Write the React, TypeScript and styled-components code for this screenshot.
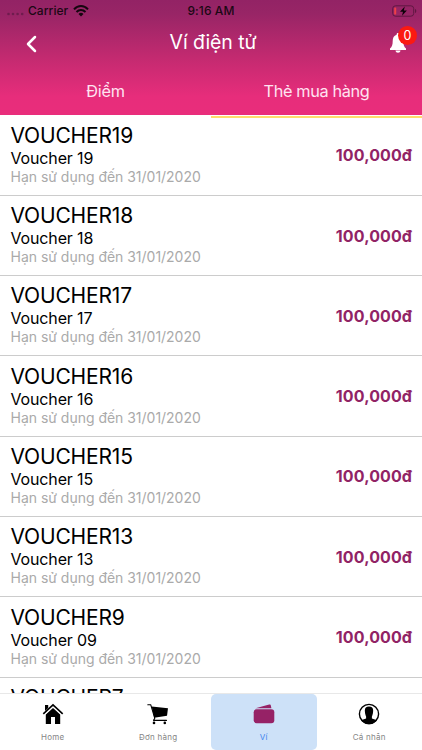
import React from 'react';
import styled, { createGlobalStyle } from 'styled-components';

const GlobalStyle = createGlobalStyle`
  * { box-sizing: border-box; }
  html, body { margin: 0; padding: 0; background: #fff; overflow: hidden; }
  body { font-family: Inter, "Noto Sans", sans-serif; }
`;

const Screen = styled.div`
  width: 422px;
  height: 750px;
  display: flex;
  flex-direction: column;
  overflow: hidden;
  background: #fff;
`;

const Header = styled.header`
  flex: none;
  height: 115px;
  display: flex;
  flex-direction: column;
  color: #fff;
  background: linear-gradient(180deg, #932365 0%, #982566 12%, #c32a70 50%, #e72d7b 84%, #e92d7b 100%);
`;

const StatusBar = styled.div`
  height: 21px;
  display: grid;
  grid-template-columns: 1fr auto 1fr;
  align-items: center;
  padding: 0 5px 0 7px;
  color: #1b0814;
  font-size: 12px;
  line-height: 20px;
  font-weight: 500;
`;

const Carrier = styled.div`
  display: flex;
  align-items: center;
  letter-spacing: 0.05px;
`;

const Clock = styled.span`
  letter-spacing: 0.1px;
  margin-right: 2px;
`;

const Signal = styled.svg`
  width: 17px;
  height: 4px;
  margin: 6px 4px 0 0;
`;

const Wifi = styled.svg`
  width: 16px;
  height: 12px;
  margin-left: 5px;
`;

const Battery = styled.svg`
  width: 25px;
  height: 12px;
  justify-self: end;
`;

const TitleBar = styled.div`
  height: 45px;
  display: grid;
  grid-template-columns: 60px 1fr 60px;
  align-items: center;
`;

const BackIcon = styled.svg`
  width: 12px;
  height: 18px;
  margin-left: 25px;
`;

const Title = styled.h1`
  margin: 0;
  padding: 0 0 3px 4px;
  text-align: center;
  font-size: 19.5px;
  line-height: 28px;
  font-weight: 400;
  letter-spacing: -0.1px;
`;

const Bell = styled.div`
  position: relative;
  width: 32px;
  height: 32px;
  margin: -10px 0 0 25px;
`;

const BellIcon = styled.svg`
  position: absolute;
  left: 2px;
  top: 10px;
  width: 18px;
  height: 20px;
`;

const Badge = styled.span`
  position: absolute;
  left: 11px;
  top: 3px;
  width: 19px;
  height: 19px;
  border-radius: 50%;
  background: #fb1a12;
  font-size: 12.5px;
  line-height: 19px;
  text-align: center;
`;

const Tabs = styled.div`
  height: 49px;
  display: grid;
  grid-template-columns: 1fr 1fr;
`;

const Tab = styled.div<{ $active?: boolean }>`
  text-align: center;
  font-size: 16.3px;
  letter-spacing: ${p => (p.$active ? '-0.35px' : '-0.2px')};
  line-height: 50px;
  color: #ffe3f1;
  border-bottom: 2px solid ${p => (p.$active ? '#ffdc6b' : 'transparent')};
`;

const List = styled.main`
  flex: 1;
  min-height: 0;
  padding-top: 0.6px;
  overflow: hidden;
`;

const Row = styled.div`
  height: 80.3px;
  display: flex;
  align-items: center;
  justify-content: space-between;
  padding: 0 10px 0 10.5px;
  border-bottom: 1px solid #ccc;
`;

const Info = styled.div`
  display: flex;
  flex-direction: column;
  padding-bottom: 3px;
`;

const Code = styled.div`
  font-size: 21px;
  line-height: 25px;
  letter-spacing: -0.18px;
  color: #000;
`;

const Name = styled.div`
  font-size: 16px;
  line-height: 20px;
  letter-spacing: -0.15px;
  color: #000;
`;

const Expiry = styled.div`
  font-size: 14px;
  line-height: 17px;
  letter-spacing: -0.02px;
  color: #aaa;
`;

const Price = styled.div`
  font-size: 16px;
  line-height: 20px;
  font-weight: 700;
  letter-spacing: 0.1px;
  color: #912365;
`;

const NavBar = styled.nav`
  flex: none;
  height: 57px;
  display: grid;
  grid-template-columns: repeat(4, 1fr);
  border-top: 1px solid #e8e8e8;
`;

const NavItem = styled.div<{ $active?: boolean }>`
  display: flex;
  flex-direction: column;
  align-items: center;
  padding-top: 9px;
  border-radius: 5px;
  background: ${p => (p.$active ? '#cde1f8' : '#fff')};
  color: ${p => (p.$active ? '#4285ee' : '#858585')};
  font-size: 8px;
  line-height: 12px;
  letter-spacing: 0.25px;
`;

const NavIcon = styled.svg`
  width: 22px;
  height: 22px;
  margin-bottom: 6px;
`;

const vouchers = [
  { code: 'VOUCHER19', name: 'Voucher 19' },
  { code: 'VOUCHER18', name: 'Voucher 18' },
  { code: 'VOUCHER17', name: 'Voucher 17' },
  { code: 'VOUCHER16', name: 'Voucher 16' },
  { code: 'VOUCHER15', name: 'Voucher 15' },
  { code: 'VOUCHER13', name: 'Voucher 13' },
  { code: 'VOUCHER9', name: 'Voucher 09' },
  { code: 'VOUCHER7', name: 'Voucher 07' },
];

export default function App() {
  return (
    <Screen>
      <GlobalStyle />
      <Header>
        <StatusBar>
          <Carrier>
            <Signal viewBox="0 0 17 4" fill="#6f1c4e">
              <circle cx="1.5" cy="2" r="1.3" />
              <circle cx="6" cy="2" r="1.3" />
              <circle cx="10.6" cy="2" r="1.3" />
              <circle cx="15.2" cy="2" r="1.3" />
            </Signal>
            Carrier
            <Wifi viewBox="0 0 16 12" fill="none" stroke="#16060f" strokeWidth="2">
              <path d="M1 4.3C5-.1 11-.1 15 4.3M3.5 7c2.6-2.8 6.4-2.8 9 0" />
              <path d="M8 11.5 5.5 8.9c1.4-1.4 3.6-1.4 5 0z" fill="#16060f" stroke="none" />
            </Wifi>
          </Carrier>
          <Clock>9:16 AM</Clock>
          <Battery viewBox="0 0 25 12">
            <rect x=".7" y=".8" width="21" height="10.4" rx="2.8" fill="none" stroke="#601742" />
            <rect x="2.2" y="2.4" width="2" height="7.2" rx=".7" fill="#ee4048" />
            <path d="M23 4v4c1.7-.5 1.7-3.5 0-4z" fill="#601742" />
            <path d="M12.8 1.5 8 6.7h3l-1 4 4.9-5.3h-3.1z" fill="#0c0308" />
          </Battery>
        </StatusBar>
        <TitleBar>
          <BackIcon viewBox="0 0 12 18" fill="none" stroke="#fff" strokeWidth="2.5" strokeLinecap="round" strokeLinejoin="round">
            <path d="M10 2 3 9l7 7" />
          </BackIcon>
          <Title>Ví điện tử</Title>
          <Bell>
            <BellIcon viewBox="0 0 18 20" fill="#fff">
              <path d="M9 0C8 0 7.6.7 7.6 1.7 4.8 2.5 3.7 5 3.7 8c0 4-.7 5.7-2.7 7.5V17h16v-1.5c-2-1.8-2.7-3.5-2.7-7.5 0-3-1.1-5.5-3.9-6.3C10.4.7 10 0 9 0zM6.5 17.5h5c-.2 1.5-1.2 2.2-2.5 2.2s-2.3-.7-2.5-2.2z" />
            </BellIcon>
            <Badge>0</Badge>
          </Bell>
        </TitleBar>
        <Tabs>
          <Tab>Điểm</Tab>
          <Tab $active>Thẻ mua hàng</Tab>
        </Tabs>
      </Header>
      <List>
        {vouchers.map(v => (
          <Row key={v.code}>
            <Info>
              <Code>{v.code}</Code>
              <Name>{v.name}</Name>
              <Expiry>Hạn sử dụng đến 31/01/2020</Expiry>
            </Info>
            <Price>100,000đ</Price>
          </Row>
        ))}
      </List>
      <NavBar>
        <NavItem>
          <NavIcon viewBox="0 0 22 22">
            <path d="M3 8V2h3.2v3M3.8 11.5 11 5l7.2 6.5V21H13v-7H9v7H3.8z" />
            <path d="M1.3 10.9 11 1.9l9.7 9" fill="none" stroke="#000" strokeWidth="1.7" />
            <path d="m2.2 12.1 8.8-8 8.8 8" fill="none" stroke="#fff" strokeWidth=".6" />
          </NavIcon>
          Home
        </NavItem>
        <NavItem>
          <NavIcon viewBox="0 0 22 22">
            <path d="M4.7 3.6 21 5.3l-1 7.5-12.8 2z" />
            <path d="M.8 1.7h2.9l4.1 13.6-1.3 2.1h13" fill="none" stroke="#000" strokeWidth="1.1" strokeLinecap="round" strokeLinejoin="round" />
            <circle cx="7" cy="19.9" r="1.3" />
            <circle cx="17.8" cy="19.9" r="1.3" />
          </NavIcon>
          Đơn hàng
        </NavItem>
        <NavItem $active>
          <NavIcon viewBox="0 0 22 22" fill="#962266">
            <rect x=".7" y="6.3" width="20.6" height="14" rx="3" />
            <path d="M2.5 5.3 16.2 1.5c1-.2 1.5.2 1.7 1.2l.5 2.6z" />
          </NavIcon>
          Ví
        </NavItem>
        <NavItem>
          <NavIcon viewBox="0 0 22 22">
            <circle cx="11" cy="11" r="9.6" fill="none" stroke="#000" strokeWidth="1.4" />
            <path d="M11 3.5c-3.2 0-4.500 1.800-4.100 5 .1 2.500.8 4 1.200 5.100v1.900L3 17.300C7 22.500 15 22.500 19 17.300l-5.100-1.800v-1.900c.4-1.100 1.100-2.600 1.200-5.100.4-3.200-.9-5-4.100-5z" />
          </NavIcon>
          Cá nhân
        </NavItem>
      </NavBar>
    </Screen>
  );
}
